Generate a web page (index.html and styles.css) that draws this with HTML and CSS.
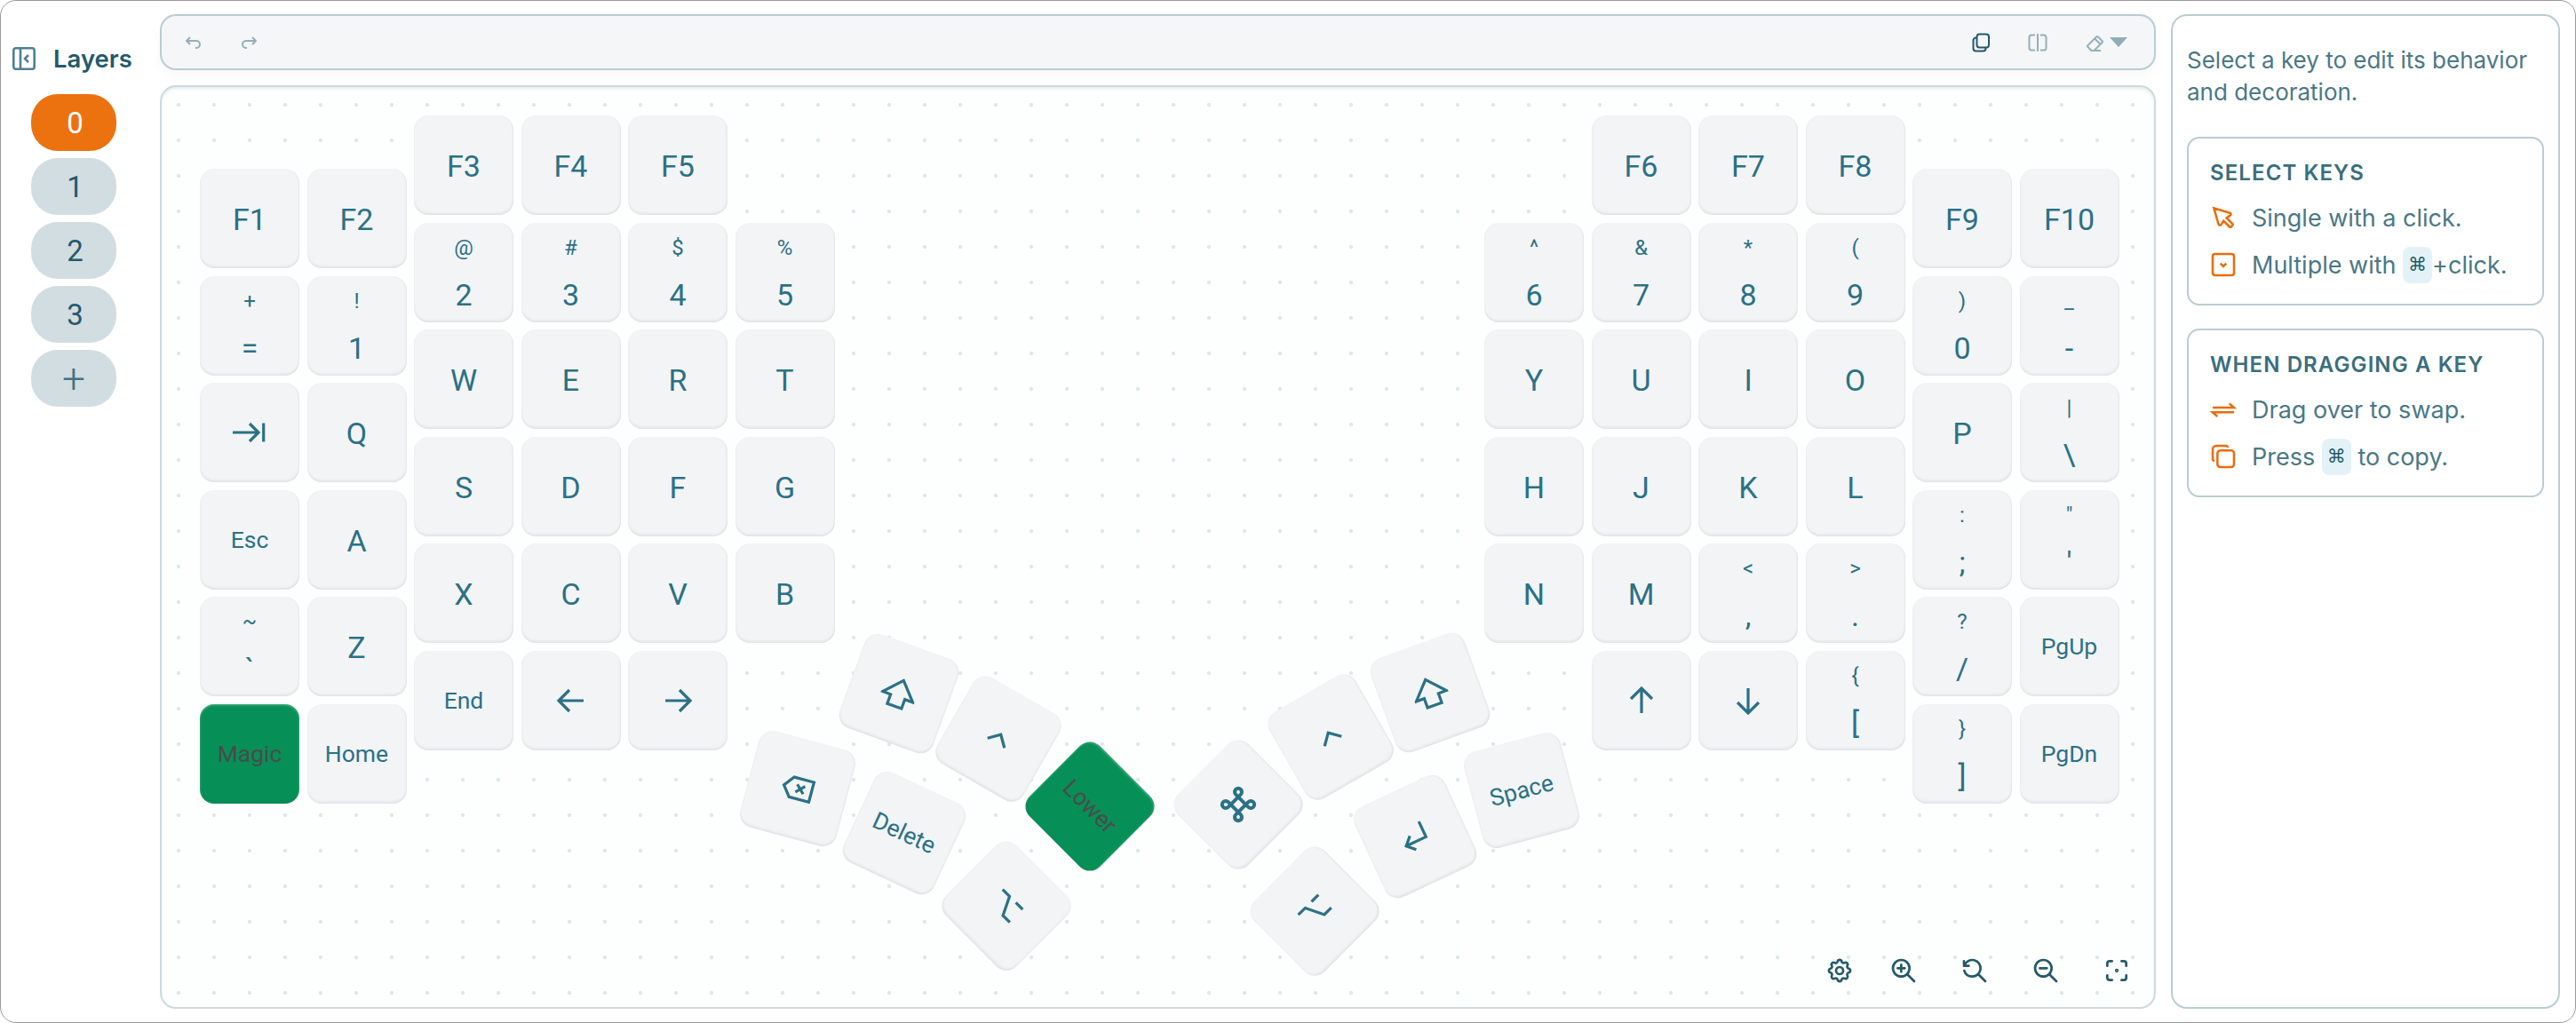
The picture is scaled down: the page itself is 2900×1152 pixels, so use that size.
FILE: index.html
```html
<!DOCTYPE html>
<html lang="en">
<head>
<meta charset="utf-8">
<title>Layout editor</title>
<link rel="stylesheet" href="styles.css">
</head>
<body>
<div class="app">
  <aside class="sidebar">
    <div class="side-head">
      <svg class="ico-side" viewBox="0 0 26 26"><rect x="1.300" y="1.300" width="23.400" height="23.400" rx="2.500"/><path d="M9 1.300v23.400M18 9l-4 4 4 4"/></svg>
      <span>Layers</span>
    </div>
    <div class="layers">
      <button class="layer layer-on">0</button>
      <button class="layer">1</button>
      <button class="layer">2</button>
      <button class="layer">3</button>
      <button class="layer layer-add">+</button>
    </div>
  </aside>

  <main class="main">
    <div class="toolbar">
      <div class="tool-group">
        <svg class="ico ico-muted" viewBox="0 0 24 24"><path d="M9 14l-4-4 4-4M5 10h11a4 4 0 1 1 0 8h-1"/></svg>
        <svg class="ico ico-muted" viewBox="0 0 24 24"><path d="M15 14l4-4-4-4M19 10H8a4 4 0 1 0 0 8h1"/></svg>
      </div>
      <div class="tool-group">
        <svg class="ico ico-dark" viewBox="0 0 24 24"><rect x="7.500" y="2.500" width="13.500" height="15" rx="3"/><path d="M7.500 6.500H6.500a3 3 0 0 0-3 3v9a3 3 0 0 0 3 3h8a3 3 0 0 0 3-3v-1"/></svg>
        <svg class="ico ico-muted" viewBox="0 0 24 24"><path d="M9 3.500H5a2.500 2.500 0 0 0-2.500 2.500v12A2.500 2.500 0 0 0 5 20.500h4M15 3.500h4A2.500 2.500 0 0 1 21.500 6v12a2.500 2.500 0 0 1-2.500 2.500h-4M12 2v20"/></svg>
        <div class="eraser">
          <svg class="ico ico-muted" viewBox="0 0 24 24"><path d="M19 21h-10.500l-4.210-4.300a1 1 0 0 1 0-1.410l10-10a1 1 0 0 1 1.410 0l5 5a1 1 0 0 1 0 1.410l-9.200 9.300M18 13.300l-6.300-6.300"/></svg>
          <span class="caret"></span>
        </div>
      </div>
    </div>

    <section class="canvas">
      <div class="half">
        <div class="col col-mid">
          <div class="key">F1</div>
          <div class="key dual"><small>+</small><span>=</span></div>
          <div class="key"><svg class="glyph" viewBox="0 0 40 40"><path d="M1 20h29M20 10l10 10-10 10M35.700 9.500v21"/></svg></div>
          <div class="key word">Esc</div>
          <div class="key dual"><small>~</small><span>`</span></div>
          <div class="key word hot">Magic</div>
        </div>
        <div class="col col-mid">
          <div class="key">F2</div>
          <div class="key dual"><small>!</small><span>1</span></div>
          <div class="key">Q</div>
          <div class="key">A</div>
          <div class="key">Z</div>
          <div class="key word">Home</div>
        </div>
        <div class="col">
          <div class="key">F3</div>
          <div class="key dual"><small>@</small><span>2</span></div>
          <div class="key">W</div>
          <div class="key">S</div>
          <div class="key">X</div>
          <div class="key word">End</div>
        </div>
        <div class="col">
          <div class="key">F4</div>
          <div class="key dual"><small>#</small><span>3</span></div>
          <div class="key">E</div>
          <div class="key">D</div>
          <div class="key">C</div>
          <div class="key"><svg class="glyph" viewBox="0 0 40 40"><use href="#arrow"/></svg></div>
        </div>
        <div class="col">
          <div class="key">F5</div>
          <div class="key dual"><small>$</small><span>4</span></div>
          <div class="key">R</div>
          <div class="key">F</div>
          <div class="key">V</div>
          <div class="key"><svg class="glyph rot-180" viewBox="0 0 40 40"><use href="#arrow"/></svg></div>
        </div>
        <div class="col col-low">
          <div class="key dual"><small>%</small><span>5</span></div>
          <div class="key">T</div>
          <div class="key">G</div>
          <div class="key">B</div>
        </div>
      </div>

      <div class="half">
        <div class="col col-low">
          <div class="key dual"><small>^</small><span>6</span></div>
          <div class="key">Y</div>
          <div class="key">H</div>
          <div class="key">N</div>
        </div>
        <div class="col">
          <div class="key">F6</div>
          <div class="key dual"><small>&amp;</small><span>7</span></div>
          <div class="key">U</div>
          <div class="key">J</div>
          <div class="key">M</div>
          <div class="key"><svg class="glyph rot-90" viewBox="0 0 40 40"><use href="#arrow"/></svg></div>
        </div>
        <div class="col">
          <div class="key">F7</div>
          <div class="key dual"><small>*</small><span>8</span></div>
          <div class="key">I</div>
          <div class="key">K</div>
          <div class="key dual"><small>&lt;</small><span>,</span></div>
          <div class="key"><svg class="glyph rot-270" viewBox="0 0 40 40"><use href="#arrow"/></svg></div>
        </div>
        <div class="col">
          <div class="key">F8</div>
          <div class="key dual"><small>(</small><span>9</span></div>
          <div class="key">O</div>
          <div class="key">L</div>
          <div class="key dual"><small>&gt;</small><span>.</span></div>
          <div class="key dual"><small>{</small><span>[</span></div>
        </div>
        <div class="col col-mid">
          <div class="key">F9</div>
          <div class="key dual"><small>)</small><span>0</span></div>
          <div class="key">P</div>
          <div class="key dual"><small>:</small><span>;</span></div>
          <div class="key dual"><small>?</small><span>/</span></div>
          <div class="key dual"><small>}</small><span>]</span></div>
        </div>
        <div class="col col-mid">
          <div class="key">F10</div>
          <div class="key dual"><small>_</small><span>-</span></div>
          <div class="key dual"><small>|</small><span>\</span></div>
          <div class="key dual"><small>"</small><span>'</span></div>
          <div class="key word">PgUp</div>
          <div class="key word">PgDn</div>
        </div>
      </div>

      <div class="key thumb" style="left:773.7px;top:626.7px;transform:rotate(20deg)"><svg class="glyph" viewBox="0 0 40 40"><use href="#shift"/></svg></div>
      <div class="key thumb" style="left:886px;top:677.5px;transform:rotate(30deg)"><svg class="glyph" viewBox="0 0 40 40"><use href="#ctrl"/></svg></div>
      <div class="key thumb word hot" style="left:988.7px;top:754.3px;transform:rotate(45deg)">Lower</div>
      <div class="key thumb" style="left:659.7px;top:734.3px;transform:rotate(15deg)"><svg class="glyph" viewBox="0 0 40 40"><path d="M4 20l9-11.500h23v23H13zM18.500 15.500l9 9M27.500 15.500l-9 9"/></svg></div>
      <div class="key thumb word" style="left:779.7px;top:784.3px;transform:rotate(25deg)">Delete</div>
      <div class="key thumb" style="left:894.7px;top:865.7px;transform:rotate(45deg)"><svg class="glyph" viewBox="0 0 40 40"><use href="#alt"/></svg></div>
      <div class="key thumb" style="left:1156.3px;top:752.3px;transform:rotate(-45deg)"><svg class="glyph-cmd" viewBox="0 0 24 24"><path d="M7 9a2 2 0 1 1 2-2v10a2 2 0 1 1-2-2h10a2 2 0 1 1-2 2V7a2 2 0 1 1 2 2H7"/></svg></div>
      <div class="key thumb" style="left:1259.7px;top:676px;transform:rotate(-30deg)"><svg class="glyph" viewBox="0 0 40 40"><use href="#ctrl"/></svg></div>
      <div class="key thumb" style="left:1371.7px;top:626px;transform:rotate(-20deg)"><svg class="glyph" viewBox="0 0 40 40"><use href="#shift"/></svg></div>
      <div class="key thumb" style="left:1354.7px;top:787.7px;transform:rotate(-25deg)"><svg class="glyph" viewBox="0 0 40 40"><path d="M31 6.500v19H6.500M15 17l-8.500 8.500L15 34"/></svg></div>
      <div class="key thumb word" style="left:1474.7px;top:736.3px;transform:rotate(-15deg)">Space</div>
      <div class="key thumb" style="left:1242px;top:871.7px;transform:rotate(-45deg)"><svg class="glyph" viewBox="0 0 40 40"><use href="#alt"/></svg></div>

      <div class="view-tools">
        <svg class="ico-view" viewBox="0 0 24 24"><path d="M10.300 4.300c.4-1.800 3-1.800 3.400 0a1.700 1.700 0 0 0 2.500 1.100c1.600-.9 3.300.8 2.400 2.400a1.700 1.700 0 0 0 1.100 2.500c1.800.4 1.800 3 0 3.400a1.700 1.700 0 0 0-1.100 2.500c.9 1.600-.8 3.300-2.400 2.400a1.700 1.700 0 0 0-2.500 1.100c-.4 1.800-3 1.800-3.400 0a1.700 1.700 0 0 0-2.500-1.100c-1.600.9-3.300-.8-2.400-2.400a1.700 1.700 0 0 0-1.100-2.500c-1.800-.4-1.800-3 0-3.400a1.700 1.700 0 0 0 1.100-2.500c-.9-1.600.8-3.300 2.400-2.400 1 .6 2.300.1 2.500-1.100z"/><circle cx="12" cy="12" r="3"/></svg>
        <svg class="ico-view" viewBox="0 0 24 24"><circle cx="10" cy="10" r="7"/><path d="M21 21l-6-6M7 10h6M10 7v6"/></svg>
        <svg class="ico-view" viewBox="0 0 24 24"><path d="M21 21l-6-6M3.268 12.043a7.017 7.017 0 0 0 6.634 4.957 7.012 7.012 0 0 0 7.043-6.131 7 7 0 0 0-5.314-7.672 7.021 7.021 0 0 0-8.241 4.403M3 4v4h4"/></svg>
        <svg class="ico-view" viewBox="0 0 24 24"><circle cx="10" cy="10" r="7"/><path d="M21 21l-6-6M7 10h6"/></svg>
        <svg class="ico-view" viewBox="0 0 24 24"><path d="M4 8V6a2 2 0 0 1 2-2h2M4 16v2a2 2 0 0 0 2 2h2M16 4h2a2 2 0 0 1 2 2v2M16 20h2a2 2 0 0 0 2-2v-2"/><circle cx="12" cy="12" r=".6"/></svg>
      </div>
    </section>
  </main>

  <aside class="panel">
    <p class="intro">Select a key to edit its behavior and decoration.</p>
    <div class="card">
      <h3>SELECT KEYS</h3>
      <div class="tip">
        <svg class="ico-tip" viewBox="0 0 24 24"><path d="M7.900 17.600a1.200 1.200 0 0 0 2.200.3l2.100-3.100 4.900 4.900a1.100 1.100 0 0 0 1.500 0l1-1a1.100 1.100 0 0 0 0-1.500l-4.900-4.900 3.100-2.100a1.200 1.200 0 0 0-.3-2.200L4 4z"/></svg>
        <span>Single with a click.</span>
      </div>
      <div class="tip">
        <svg class="ico-tip" viewBox="0 0 24 24"><rect x="3" y="3" width="18" height="18" rx="2"/><path d="M9.500 11l2.500 2.500 2.500-2.500"/></svg>
        <span>Multiple with <kbd>⌘</kbd>+click.</span>
      </div>
    </div>
    <div class="card">
      <h3>WHEN DRAGGING A KEY</h3>
      <div class="tip">
        <svg class="ico-tip" viewBox="0 0 24 24"><path d="M3 10.500h18l-4-3.500M21 14.500H3l4 3.500"/></svg>
        <span>Drag over to swap.</span>
      </div>
      <div class="tip">
        <svg class="ico-tip" viewBox="0 0 24 24"><rect x="7" y="7" width="14" height="14" rx="2.500"/><path d="M16 4.500A2 2 0 0 0 14.500 3H6a3 3 0 0 0-3 3v8.500A2 2 0 0 0 4.500 16"/></svg>
        <span>Press <kbd>⌘</kbd> to copy.</span>
      </div>
    </div>
  </aside>
</div>

<svg class="sprite" aria-hidden="true">
  <symbol id="arrow" viewBox="0 0 40 40"><path d="M34 20H6.500M18 8L6 20l12 12"/></symbol>
  <symbol id="shift" viewBox="0 0 40 40"><path d="M20 4.500L38 24h-9.500v11h-17V24H2z"/></symbol>
  <symbol id="ctrl" viewBox="0 0 40 40"><path d="M9 25.500L20 14.500l11 11"/></symbol>
  <symbol id="alt" viewBox="0 0 40 40"><path d="M4 10h11l10 20.500h11M25 10h11"/></symbol>
</svg>
</body>
</html>
```

FILE: styles.css
```css
* { box-sizing: border-box; }
html, body { margin: 0; padding: 0; background: #fff; }
body { font-family: "Inter", "Liberation Sans", sans-serif; color: #24596b; }
.sprite { position: absolute; width: 0; height: 0; }

.app {
  width: 2900px;
  height: 1152px;
  display: flex;
  padding: 15px 17px 15px 0;
  background: #fff;
  border: 1px solid #999;
  border-radius: 18px;
  overflow: hidden;
}

/* Sidebar */
.sidebar { width: 179px; flex: none; padding-top: 32px; }
.side-head { display: flex; align-items: center; gap: 20px; height: 36px; padding-left: 13px; font-size: 27.5px; font-weight: 600; color: #24596b; margin-bottom: 22px; }
.ico-side { width: 26px; height: 26px; fill: none; stroke: #4f8090; stroke-width: 2.6; }
.layers { display: flex; flex-direction: column; gap: 8px; padding-left: 34px; }
.layer { width: 96px; height: 64px; border: 0; border-radius: 30px; background: #d1dde1; color: #24596b; font: 400 33px "Roboto", sans-serif; padding: 0 0 0 3px; }
.layer-on { background: #ec7210; color: #fff; }
.layer-add { color: #3f7484; font-size: 46px; font-weight: 300; padding: 0; }

/* Main column */
.main { width: 2247px; flex: none; display: flex; flex-direction: column; gap: 17px; }
.toolbar {
  height: 63px;
  flex: none;
  display: flex;
  align-items: center;
  justify-content: space-between;
  padding: 0 30px 0 23px;
  background: #f4f6f8;
  border: 2px solid #b9cdd2;
  border-radius: 18px;
  box-shadow: 0 6px 14px rgba(120, 140, 150, .06);
}
.tool-group { display: flex; align-items: center; gap: 40px; }
.eraser { display: flex; align-items: center; gap: 5px; }
.ico { width: 24px; height: 24px; fill: none; stroke-width: 2; stroke-linejoin: round; }
.ico-muted { stroke: #93b0b8; }
.ico-dark { stroke: #24596b; }
.caret { width: 0; height: 0; border-left: 10px solid transparent; border-right: 10px solid transparent; border-top: 11px solid #93adb5; }

/* Canvas */
.canvas {
  position: relative;
  flex: 1;
  display: flex;
  justify-content: space-between;
  align-items: flex-start;
  padding: 32px 39.5px 0 43px;
  border: 2px solid #cddadd;
  border-radius: 18px;
  background-color: #fdfefe;
  background-image: radial-gradient(circle at 20px 20px, #dde8eb 0, #dde8eb 1.6px, rgba(221, 232, 235, 0) 2.6px);
  background-size: 40px 40px;
  background-position: -1px 0;
  box-shadow: inset 0 2px 3px rgba(120, 150, 160, .18);
}
.half { display: flex; gap: 8.5px; }
.col { display: flex; flex-direction: column; gap: 8.5px; }
.col-mid { margin-top: 60px; }
.col-low { margin-top: 120.5px; }

.key {
  width: 112px;
  height: 112px;
  flex: none;
  display: flex;
  align-items: center;
  justify-content: center;
  padding-top: 2px;
  background: #f3f4f6;
  border-radius: 16px;
  color: #2a7186;
  font-family: "Roboto", "Inter", sans-serif;
  font-size: 34px;
  line-height: 40px;
  box-shadow: inset 0 -3px 3px -1px rgba(70, 80, 90, .1), inset -2px 0 2px -1px rgba(70, 80, 90, .07), inset 1px 0 2px rgba(70, 80, 90, .02);
}
.word { font-size: 26.5px; padding-top: 0; }
.dual { flex-direction: column; justify-content: space-between; padding: 10px 0 11px; }
.dual small { font-size: 24px; line-height: 36px; }
.dual span { line-height: 40px; }
.hot { background: #068f57; color: #4b4b4b; box-shadow: inset 0 1px 3px rgba(255, 255, 255, .35), inset 0 -2px 3px rgba(0, 0, 0, .05); }
.thumb { position: absolute; }
.glyph { width: 40px; height: 40px; margin-top: -2px; fill: none; stroke: #2a7186; stroke-width: 3.2; overflow: visible; }
.glyph-cmd { width: 48px; height: 48px; margin-top: -2px; fill: none; stroke: #2a7186; stroke-width: 2; }
.rot-180 { transform: rotate(180deg); }
.rot-90 { transform: rotate(90deg); }
.rot-270 { transform: rotate(270deg); }

.view-tools { position: absolute; right: 26px; bottom: 25px; display: flex; gap: 48px; }
.ico-view { width: 32px; height: 32px; fill: none; stroke: #24596b; stroke-width: 2; stroke-linecap: round; stroke-linejoin: round; }
.ico-view:first-child { margin-right: -8px; }

/* Right panel */
.panel {
  width: 438px;
  flex: none;
  margin-left: 17px;
  padding: 32px 16px 0;
  border: 2px solid #b9cdd2;
  border-radius: 18px;
}
.intro { margin: 0 0 31.5px; font-size: 26px; line-height: 36px; color: #4a7886; }
.card { height: 190px; margin-bottom: 26px; padding: 23px 24px; border: 2px solid #b9cdd2; border-radius: 14px; }
.card h3 { margin: 0 0 14px; font-size: 24px; font-weight: 600; line-height: 32px; letter-spacing: 1.1px; color: #3a6e7d; }
.tip { display: flex; align-items: center; gap: 16px; height: 41px; margin-bottom: 12px; font-size: 27px; line-height: 41px; color: #4a7886; margin-left: -1px; white-space: nowrap; }
.tip:last-child { margin-bottom: 0; }
.ico-tip { width: 32px; height: 32px; flex: none; fill: none; stroke: #ea6c0c; stroke-width: 1.9; }
kbd { display: inline-block; width: 33px; height: 41px; text-align: center; border-radius: 8px; background: #e3f2f6; color: #24596b; font: 400 21px/41px "DejaVu Sans", sans-serif; vertical-align: top; }
```
